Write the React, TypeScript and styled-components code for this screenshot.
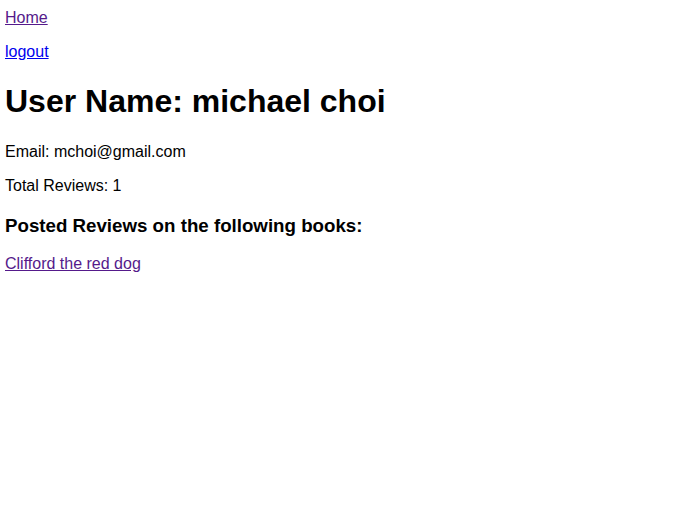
import React from "react";
import styled, { createGlobalStyle } from "styled-components";

const GlobalStyle = createGlobalStyle`
  html, body {
    margin: 0;
    padding: 0;
    background: #ffffff;
  }
  body {
    font-family: "Liberation Sans", Helvetica, Arial, sans-serif;
    font-size: 16px;
    color: #000000;
  }
`;

const Page = styled.div`
  padding: 9px 5px;
`;

const Link = styled.a<{ $visited?: boolean }>`
  color: ${(p) => (p.$visited ? "#551a8b" : "#0000ee")};
  text-decoration: underline;
  cursor: pointer;
`;

const Paragraph = styled.p`
  margin: 16px 0;
  line-height: 18px;
`;

const TopLine = styled.div`
  line-height: 18px;
`;

const Title = styled.h1`
  font-size: 32px;
  font-weight: bold;
  margin: 22px 0 23px;
  line-height: 37px;
`;

const Subtitle = styled.h3`
  font-size: 18.72px;
  font-weight: bold;
  margin: 20px 0 18px;
  line-height: 22px;
`;

export default function App() {
  return (
    <>
      <GlobalStyle />
      <Page>
        <TopLine>
          <Link href="#" $visited>
            Home
          </Link>
        </TopLine>
        <Paragraph>
          <Link href="#">logout</Link>
        </Paragraph>
        <Title>User Name: michael choi</Title>
        <Paragraph>Email: mchoi@gmail.com</Paragraph>
        <Paragraph>Total Reviews: 1</Paragraph>
        <Subtitle>Posted Reviews on the following books:</Subtitle>
        <Paragraph>
          <Link href="#" $visited>
            Clifford the red dog
          </Link>
        </Paragraph>
      </Page>
    </>
  );
}
